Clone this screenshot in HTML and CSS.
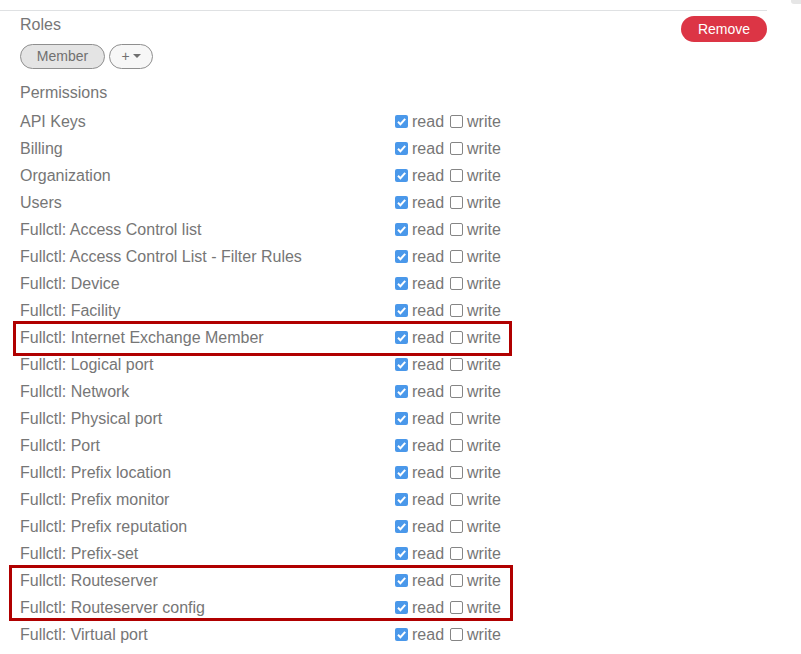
FILE: index.html
```html
<!DOCTYPE html>
<html>
<head>
<meta charset="utf-8">
<link rel="stylesheet" href="styles.css">
</head>
<body>
<div class="corner"></div>
<div class="panel">
  <div class="header">
    <div class="title roles-title">Roles</div>
    <button class="btn-remove">Remove</button>
  </div>
  <div class="pills">
    <span class="pill pill-role">Member</span>
    <span class="pill pill-add">+ <span class="caret"></span></span>
  </div>
  <div class="title perm-title">Permissions</div>
  <div class="rows">
    <div class="row"><span class="label">API Keys</span><span class="opts"><span class="cb on"></span>read<span class="cb"></span>write</span></div>
    <div class="row"><span class="label">Billing</span><span class="opts"><span class="cb on"></span>read<span class="cb"></span>write</span></div>
    <div class="row"><span class="label">Organization</span><span class="opts"><span class="cb on"></span>read<span class="cb"></span>write</span></div>
    <div class="row"><span class="label">Users</span><span class="opts"><span class="cb on"></span>read<span class="cb"></span>write</span></div>
    <div class="row"><span class="label">Fullctl: Access Control list</span><span class="opts"><span class="cb on"></span>read<span class="cb"></span>write</span></div>
    <div class="row"><span class="label">Fullctl: Access Control List - Filter Rules</span><span class="opts"><span class="cb on"></span>read<span class="cb"></span>write</span></div>
    <div class="row"><span class="label">Fullctl: Device</span><span class="opts"><span class="cb on"></span>read<span class="cb"></span>write</span></div>
    <div class="row"><span class="label">Fullctl: Facility</span><span class="opts"><span class="cb on"></span>read<span class="cb"></span>write</span></div>
    <div class="hl hl-one">
      <div class="row"><span class="label">Fullctl: Internet Exchange Member</span><span class="opts"><span class="cb on"></span>read<span class="cb"></span>write</span></div>
    </div>
    <div class="row"><span class="label">Fullctl: Logical port</span><span class="opts"><span class="cb on"></span>read<span class="cb"></span>write</span></div>
    <div class="row"><span class="label">Fullctl: Network</span><span class="opts"><span class="cb on"></span>read<span class="cb"></span>write</span></div>
    <div class="row"><span class="label">Fullctl: Physical port</span><span class="opts"><span class="cb on"></span>read<span class="cb"></span>write</span></div>
    <div class="row"><span class="label">Fullctl: Port</span><span class="opts"><span class="cb on"></span>read<span class="cb"></span>write</span></div>
    <div class="row"><span class="label">Fullctl: Prefix location</span><span class="opts"><span class="cb on"></span>read<span class="cb"></span>write</span></div>
    <div class="row"><span class="label">Fullctl: Prefix monitor</span><span class="opts"><span class="cb on"></span>read<span class="cb"></span>write</span></div>
    <div class="row"><span class="label">Fullctl: Prefix reputation</span><span class="opts"><span class="cb on"></span>read<span class="cb"></span>write</span></div>
    <div class="row"><span class="label">Fullctl: Prefix-set</span><span class="opts"><span class="cb on"></span>read<span class="cb"></span>write</span></div>
    <div class="hl hl-two">
      <div class="row"><span class="label">Fullctl: Routeserver</span><span class="opts"><span class="cb on"></span>read<span class="cb"></span>write</span></div>
      <div class="row"><span class="label">Fullctl: Routeserver config</span><span class="opts"><span class="cb on"></span>read<span class="cb"></span>write</span></div>
    </div>
    <div class="row"><span class="label">Fullctl: Virtual port</span><span class="opts"><span class="cb on"></span>read<span class="cb"></span>write</span></div>
  </div>
</div>
</body>
</html>
```
FILE: styles.css
```css
html, body {
  margin: 0;
  padding: 0;
  background: #fff;
}
body {
  font-family: "Liberation Sans", Arial, sans-serif;
  font-size: 16px;
  color: #767676;
  position: relative;
  overflow: hidden;
}
.corner {
  position: absolute;
  top: 0;
  right: 0;
  width: 10px;
  height: 4px;
  background: #e6e6e6;
  border-bottom-left-radius: 3px;
}
.panel {
  width: 747px;
  margin-top: 10px;
  padding-left: 20px;
  border-top: 1px solid #dfe1e3;
}
.header {
  display: flex;
  justify-content: space-between;
  align-items: flex-start;
}
.title {
  line-height: 24px;
  height: 24px;
}
.roles-title {
  margin-top: 2px;
}
.btn-remove {
  margin-top: 5px;
  width: 86px;
  height: 26px;
  border: none;
  border-radius: 13px;
  background: #dc3545;
  color: #fff;
  font-family: "Liberation Sans", Arial, sans-serif;
  font-size: 14px;
  padding: 0;
  line-height: 26px;
}
.pills {
  display: flex;
  gap: 4px;
  margin-top: 2px;
}
.pill {
  box-sizing: border-box;
  height: 25px;
  border: 1px solid #8f8f8f;
  border-radius: 13px;
  font-size: 14px;
  line-height: 23px;
  color: #707070;
  display: inline-flex;
  align-items: center;
  justify-content: center;
}
.pill-role {
  width: 85px;
  background: #e4e4e4;
}
.pill-add {
  width: 44px;
  background: #f7f7f7;
  gap: 3px;
}
.caret {
  width: 0;
  height: 0;
  border-left: 4px solid transparent;
  border-right: 4px solid transparent;
  border-top: 4px solid #707070;
  margin-top: -2px;
}
.perm-title {
  margin-top: 12px;
}
.rows {
  margin-top: 3px;
  width: 480px;
}
.row {
  display: flex;
  align-items: center;
  height: 27px;
}
.label {
  width: 375px;
  flex: none;
}
.opts {
  display: flex;
  align-items: center;
}
.cb {
  box-sizing: border-box;
  width: 13px;
  height: 13px;
  border: 1px solid #858585;
  border-radius: 2px;
  background: #fff;
  margin-right: 4px;
  margin-left: 6px;
  flex: none;
}
.cb.on {
  margin-left: 0;
  border: none;
  background-color: #4a98ea;
  background-image: url("data:image/svg+xml;utf8,<svg xmlns='http://www.w3.org/2000/svg' viewBox='0 0 13 13'><path d='M3 6.8 L5.4 9.2 L10.2 3.8' fill='none' stroke='white' stroke-width='2'/></svg>");
}
.hl {
  position: relative;
}
.hl::after {
  content: "";
  position: absolute;
  border: 3px solid #b00000;
  pointer-events: none;
}
.hl-one::after {
  top: -3px;
  bottom: -5px;
  left: -7px;
  right: -12px;
}
.hl-two::after {
  top: -2px;
  bottom: 0;
  left: -11px;
  right: -13px;
}
```
